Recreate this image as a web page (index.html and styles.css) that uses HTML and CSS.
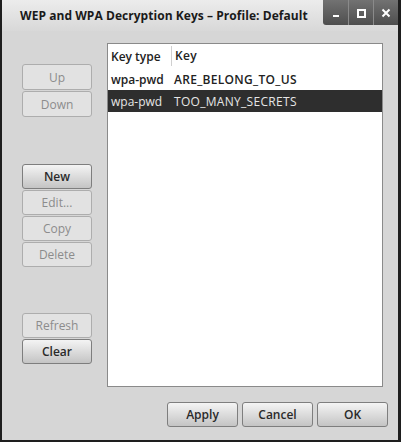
FILE: index.html
```html
<!DOCTYPE html>
<html>
<head>
<meta charset="utf-8">
<link rel="stylesheet" href="styles.css">
</head>
<body>
<div class="window">
  <div class="titlebar">
    <div class="title">WEP and WPA Decryption Keys – Profile: Default</div>
    <div class="controls">
      <div class="ctl"><svg width="12" height="12" viewBox="0 0 12 12"><rect x="3" y="8" width="6" height="2" fill="#fff"/></svg></div>
      <div class="ctl"><svg width="12" height="12" viewBox="0 0 12 12"><rect x="3" y="3" width="7" height="7" fill="none" stroke="#fff" stroke-width="2"/></svg></div>
      <div class="ctl"><svg width="12" height="12" viewBox="0 0 12 12"><path d="M2.5 2.5 L9.5 9.5 M9.5 2.5 L2.5 9.5" stroke="#fff" stroke-width="2"/></svg></div>
    </div>
  </div>
  <div class="body">
    <div class="main">
      <div class="side">
        <div class="group g1">
          <button class="btn tall dis">Up</button>
          <button class="btn tall dis">Down</button>
        </div>
        <div class="group g2">
          <button class="btn on">New</button>
          <button class="btn dis">Edit...</button>
          <button class="btn dis">Copy</button>
          <button class="btn dis">Delete</button>
        </div>
        <div class="group g3">
          <button class="btn dis">Refresh</button>
          <button class="btn on">Clear</button>
        </div>
      </div>
      <div class="list">
        <div class="row head">
          <div class="c1">Key type</div>
          <div class="c2">Key</div>
        </div>
        <div class="row">
          <div class="c1">wpa-pwd</div>
          <div class="c2">ARE_BELONG_TO_US</div>
        </div>
        <div class="row sel">
          <div class="c1">wpa-pwd</div>
          <div class="c2">TOO_MANY_SECRETS</div>
        </div>
      </div>
    </div>
    <div class="footer">
      <button class="btn on wide">Apply</button>
      <button class="btn on wide">Cancel</button>
      <button class="btn on wide">OK</button>
    </div>
  </div>
</div>
</body>
</html>
```

FILE: styles.css
```css
* { box-sizing: border-box; }
html, body { margin: 0; padding: 0; background: #d6d6d6; }
body { width: 401px; height: 442px; overflow: hidden; font-family: "Open Sans", "DejaVu Sans", sans-serif; }

.window {
  width: 401px;
  height: 442px;
  display: flex;
  flex-direction: column;
  background: #d6d6d6;
  border-left: 2px solid #1e1e1e;
  border-right: 3px solid #1e1e1e;
  border-bottom: 2px solid #1e1e1e;
}

.titlebar {
  height: 31px;
  flex: none;
  display: flex;
  align-items: flex-start;
  justify-content: space-between;
  background: linear-gradient(#ececec, #d8d8d8);
}
.title {
  padding-left: 18px;
  padding-top: 7px;
  font-family: "Open Sans", sans-serif;
  font-weight: 700;
  font-size: 12px;
  color: #1a1a1a;
  letter-spacing: 0.05px;
}
.controls {
  display: flex;
  height: 25px;
  background: linear-gradient(#727272, #4e4e4e);
  border-bottom-left-radius: 3px;
}
.ctl {
  width: 25px;
  height: 25px;
  display: flex;
  align-items: center;
  justify-content: center;
  border-left: 1px solid #8a8a8a;
}
.ctl:first-child { border-left: none; }

.body {
  flex: 1;
  display: flex;
  flex-direction: column;
}
.main {
  display: flex;
  padding-top: 12px;
}
.side {
  width: 105px;
  padding-left: 20px;
  display: flex;
  flex-direction: column;
}
.group { display: flex; flex-direction: column; gap: 1px; width: 70px; }
.g1 { margin-top: 21px; }
.g2 { margin-top: 47px; }
.g3 { margin-top: 46px; }

.btn {
  width: 70px;
  height: 25px;
  margin: 0;
  padding: 0;
  font-family: "Open Sans", sans-serif;
  font-size: 12px;
  border-radius: 3px;
  border: 1px solid #a6a6a6;
}
.btn.tall { height: 26px; }
.btn.dis {
  background: #e2e2e2;
  color: #8c8c8c;
  border-color: #adadad;
}
.btn.on {
  background: linear-gradient(#f4f4f4, #c4c4c4);
  color: #2a2a2a;
  border-color: #7e7e7e;
  font-weight: 600;
}

.list {
  width: 276px;
  height: 344px;
  background: #fff;
  border: 1px solid #8a8a8a;
}
.row {
  display: flex;
  height: 22px;
  align-items: center;
  font-size: 12px;
  color: #222;
  font-weight: 600;
}
.row.head { height: 24px; }
.c1 { width: 63px; padding-left: 3px; }
.c2 { padding-left: 3px; letter-spacing: 0.3px; }
.head .c2 { border-left: 1px solid #d0d0d0; height: 20px; line-height: 20px; }
.row.sel { background: #2e2e2e; color: #e6e6e6; font-weight: 400; }

.footer {
  display: flex;
  justify-content: flex-end;
  gap: 4px;
  padding-top: 15px;
  padding-right: 10px;
}
.btn.wide { width: 71px; height: 25px; }
```
